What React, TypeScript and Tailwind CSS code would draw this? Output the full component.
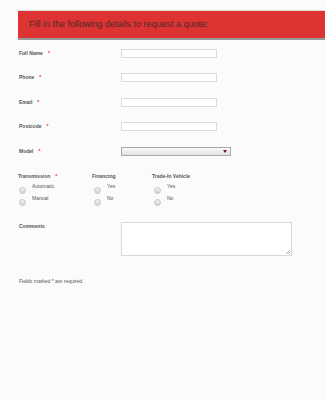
import React from "react";

const Req = () => <span className="text-[#d33] ml-[5px]">*</span>;

function TextRow({ label, mt }: { label: string; mt: string }) {
  return (
    <div className={`flex items-center h-[9px] ${mt}`}>
      <div className="w-[102px] text-[5px] font-bold text-[#555] leading-none flex items-center">
        <span>{label}</span>
        <Req />
      </div>
      <div className="w-[96px] h-[9px] bg-white border border-[#dcdcdc]" />
    </div>
  );
}

function Radio({ label }: { label: string }) {
  return (
    <div className="flex items-start h-[12px]">
      <div className="mt-[1px] w-[7px] h-[7px] rounded-full border border-[#c4c4c4] bg-gradient-to-b from-[#f4f4f4] to-[#d4d4d4]" />
      <span className="ml-[6px] -mt-[2px] text-[5px] text-[#555] leading-none">{label}</span>
    </div>
  );
}

export default function App() {
  return (
    <div
      className="w-[325px] h-[400px] bg-[#fbfbfb] overflow-hidden"
      style={{ fontFamily: '"Liberation Sans", Arial, sans-serif' }}
    >
      <div className="pt-[10px] pl-[18px]">
        <div className="border-t border-[#d9d9d9] border-b-2 border-b-[#9a9a9a] bg-[#dd3333] h-[30px] flex items-center pl-[11px]">
          <span className="text-[9px] text-[#4e2a2a] leading-none">Fill in the following details to request a quote:</span>
        </div>
      </div>
      <div className="pl-[19px]">
        <TextRow label="Full Name" mt="mt-[9px]" />
        <TextRow label="Phone" mt="mt-[15px]" />
        <TextRow label="Email" mt="mt-[16px]" />
        <TextRow label="Postcode" mt="mt-[15px]" />
        <div className="flex items-center h-[9px] mt-[16px]">
          <div className="w-[102px] text-[5px] font-bold text-[#555] leading-none flex items-center">
            <span>Model</span>
            <Req />
          </div>
          <div className="w-[110px] h-[9px] border border-[#a8a8a8] bg-gradient-to-b from-[#fafafa] to-[#e2e2e2] flex items-center justify-end pr-[3px]">
            <svg width="4" height="3" viewBox="0 0 4 3">
              <path d="M0 0 H4 L2 3 Z" fill="#6e1c1c" />
            </svg>
          </div>
        </div>

        <div className="flex mt-[18px] -ml-[1px]">
          <div className="w-[74px]">
            <div className="text-[5px] font-bold text-[#555] leading-none flex items-center h-[5px]">
              <span>Transmission</span>
              <Req />
            </div>
            <div className="mt-[7px] pl-[1px]">
              <Radio label="Automatic" />
              <Radio label="Manual" />
            </div>
          </div>
          <div className="w-[60px]">
            <div className="text-[5px] font-bold text-[#555] leading-none h-[5px]">Financing</div>
            <div className="mt-[7px] pl-[2px]">
              <Radio label="Yes" />
              <Radio label="No" />
            </div>
          </div>
          <div>
            <div className="text-[5px] font-bold text-[#555] leading-none h-[5px]">Trade-In Vehicle</div>
            <div className="mt-[7px] pl-[2px]">
              <Radio label="Yes" />
              <Radio label="No" />
            </div>
          </div>
        </div>

        <div className="flex items-start mt-[12px]">
          <div className="w-[102px] pt-[2px] text-[5px] font-bold text-[#555] leading-none">Comments</div>
          <div className="relative w-[171px] h-[34px] bg-white border border-[#d8d8d8]">
            <svg className="absolute right-[1px] bottom-[1px]" width="5" height="5" viewBox="0 0 5 5">
              <path d="M5 1 L1 5 M5 3 L3 5" stroke="#888" strokeWidth="0.7" />
            </svg>
          </div>
        </div>

        <div className="mt-[23px] text-[5px] text-[#555] leading-none">Fields marked * are required.</div>
      </div>
    </div>
  );
}
